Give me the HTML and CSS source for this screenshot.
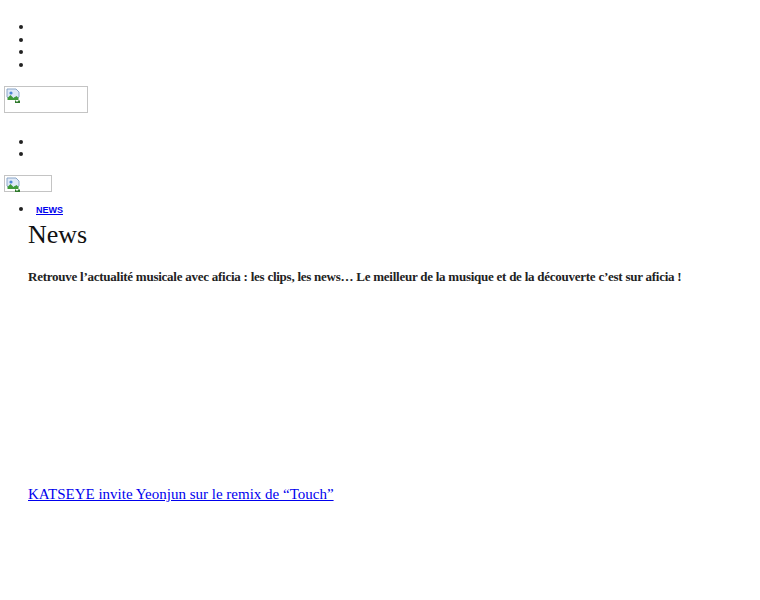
FILE: index.html
```html
<!DOCTYPE html>
<html lang="fr">
<head>
    <meta charset="UTF-8">
    <meta name="viewport" content="width=device-width, initial-scale=1.0">
    <title>News - aficia</title>
    <link rel="stylesheet" href="styles.css">
</head>
<body>
    <header>
        <ul class="top-menu">
            <li></li>
            <li></li>
            <li></li>
            <li></li>
        </ul>
        <a href="#" class="logo logo-big">
            <svg class="broken" viewBox="0 0 16 16" width="16" height="16">
                <path d="M1 1h9l3 3v5l-2 2-2-2-2 2-2-2-2 2-2-2z" fill="#dfe9f7" stroke="#8aa6c8" stroke-width="1"/>
                <circle cx="5" cy="5" r="1.6" fill="#4f86d6"/>
                <path d="M1.5 10l3-3 3 3 3-2 2 2v2h-11z" fill="#3f9a3a"/>
                <path d="M9 12l2 2 2-2 1 1v2h-5z" fill="#2f7a2c"/>
            </svg>
        </a>
        <ul class="social-menu">
            <li></li>
            <li></li>
        </ul>
        <a href="#" class="logo logo-small">
            <svg class="broken" viewBox="0 0 16 16" width="16" height="16">
                <path d="M1 1h9l3 3v5l-2 2-2-2-2 2-2-2-2 2-2-2z" fill="#dfe9f7" stroke="#8aa6c8" stroke-width="1"/>
                <circle cx="5" cy="5" r="1.6" fill="#4f86d6"/>
                <path d="M1.5 10l3-3 3 3 3-2 2 2v2h-11z" fill="#3f9a3a"/>
                <path d="M9 12l2 2 2-2 1 1v2h-5z" fill="#2f7a2c"/>
            </svg>
        </a>
    </header>
    <main>
        <ul class="breadcrumb">
            <li><a href="#">News</a></li>
        </ul>
        <h1>News</h1>
        <p class="intro">Retrouve l’actualité musicale avec aficia : les clips, les news… Le meilleur de la musique et de la découverte c’est sur aficia !</p>
        <article class="post">
            <div class="post-thumb"></div>
            <h2><a href="#">KATSEYE invite Yeonjun sur le remix de “Touch”</a></h2>
        </article>
    </main>
</body>
</html>
```

FILE: styles.css
```css
body {
    margin: 4px;
    font-family: "Liberation Serif", "DejaVu Serif", serif;
    font-size: 11px;
    line-height: 12.7px;
    color: #222;
    background-color: #fff;
}
ul {
    margin: 0;
    padding-left: 30px;
    font-size: 14px;
    line-height: 12.7px;
}
.top-menu {
    margin-top: 17px;
    margin-bottom: 14px;
}
.top-menu li,
.social-menu li {
    height: 12.7px;
}
.logo {
    display: block;
    box-sizing: border-box;
    border: 1px solid #c4c4c4;
    text-decoration: none;
}
.logo-big {
    width: 84px;
    height: 27px;
}
.logo-small {
    width: 48px;
    height: 17px;
}
.broken {
    display: block;
    margin: 1px 0 0 1px;
}
.social-menu {
    margin-top: 23px;
    margin-bottom: 14px;
}
main {
    padding-left: 24px;
}
.breadcrumb {
    margin-top: 11px;
    padding-left: 6px;
}
.breadcrumb li {
    padding-left: 2px;
}
.breadcrumb a {
    color: #0000ee;
    font-family: "Liberation Sans", Arial, sans-serif;
    font-size: 9px;
    font-weight: bold;
    text-transform: uppercase;
}
h1 {
    margin: 3px 0 0;
    font-size: 26px;
    line-height: 30px;
    font-weight: normal;
    color: #111;
}
.intro {
    margin: 17px 0 0;
    font-size: 13px;
    line-height: 20px;
    letter-spacing: -0.25px;
    font-weight: bold;
    color: #222;
}
.post-thumb {
    height: 197px;
}
.post h2 {
    margin: 0;
    font-size: 15px;
    line-height: 20px;
    font-weight: normal;
}
.post h2 a {
    color: #0000ee;
}
```
